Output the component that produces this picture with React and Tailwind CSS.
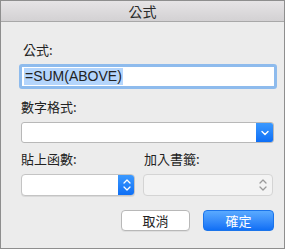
const Chevron = () => (
  <svg width="10" height="6" viewBox="0 0 10 6" fill="none">
    <path d="M2 1.5l3 3 3-3" stroke="white" strokeWidth="1.4" strokeLinecap="round" strokeLinejoin="round" />
  </svg>
)

const Stepper = ({ color }) => (
  <svg width="10" height="14" viewBox="0 0 10 14" fill="none">
    <path d="M2 5l3-3 3 3" stroke={color} strokeWidth="1.3" strokeLinecap="round" strokeLinejoin="round" />
    <path d="M2 9l3 3 3-3" stroke={color} strokeWidth="1.3" strokeLinecap="round" strokeLinejoin="round" />
  </svg>
)

const App = () => {
  return (
    <div
      className="w-[285px] h-[249px] bg-[#ececec] border border-[#8e8e8e] flex flex-col text-[13px] text-[#222]"
      style={{ fontFamily: '"Noto Sans CJK TC", "Liberation Sans", sans-serif' }}
    >
      <div className="h-[21px] shrink-0 flex items-center justify-center bg-gradient-to-b from-[#e6e4e6] to-[#d3d1d3] border-b border-[#a8a8a8] text-[14px] text-[#2a2a2a] leading-none">
        公式
      </div>

      <div className="flex flex-col pl-[20px] pr-[10px]">
        <div className="mt-[19px] h-[18px] pl-[2px] leading-[18px]">公式:</div>
        <div className="mt-[5px] -mx-[2px] mr-[-3px] h-[25px] rounded-[3px] border-[3px] border-[#8ebbed] bg-white flex items-center pl-[2px]">
          <span
            className="bg-[#b4d5fc] text-[#222] text-[14px] leading-[17px] px-[1px]"
            style={{ fontFamily: '"Liberation Sans", sans-serif' }}
          >
            =SUM(ABOVE)
          </span>
        </div>

        <div className="mt-[9px] h-[18px] leading-[18px]">數字格式:</div>
        <div className="mt-[6px] h-[21px] flex border border-[#b8b8b8] rounded-[3px] bg-white overflow-hidden">
          <div className="flex-1" />
          <div className="w-[18px] -my-[1px] -mr-[1px] bg-gradient-to-b from-[#3d9bff] to-[#0a6cf5] flex items-center justify-center rounded-r-[3px]">
            <Chevron />
          </div>
        </div>

        <div className="mt-[7px] flex h-[18px] leading-[18px]">
          <div className="w-[123px]">貼上函數:</div>
          <div>加入書籤:</div>
        </div>

        <div className="mt-[6px] flex h-[22px]">
          <div className="w-[114px] flex border border-[#c4c4c4] rounded-[4px] bg-white overflow-hidden shadow-[0_1px_0_rgba(0,0,0,0.08)]">
            <div className="flex-1" />
            <div className="w-[17px] -my-[1px] -mr-[1px] bg-gradient-to-b from-[#3d9bff] to-[#0a6cf5] flex items-center justify-center">
              <Stepper color="white" />
            </div>
          </div>
          <div className="ml-[8px] w-[130px] flex border border-[#d4d4d4] rounded-[4px] bg-[#f3f3f3] items-center justify-end pr-[4px]">
            <Stepper color="#9a9a9a" />
          </div>
        </div>

        <div className="mt-[14px] flex justify-end gap-[13px]">
          <button className="w-[69px] h-[21px] rounded-[4px] border border-[#b8b8b8] bg-white text-[13px] leading-none text-[#222] shadow-[0_1px_0_rgba(0,0,0,0.06)]">
            取消
          </button>
          <button className="w-[71px] h-[21px] rounded-[4px] bg-gradient-to-b from-[#5aaaff] to-[#0f6ff5] border border-[#1b74ea] text-[13px] leading-none text-white">
            確定
          </button>
        </div>
      </div>
    </div>
  )
}

export default App
